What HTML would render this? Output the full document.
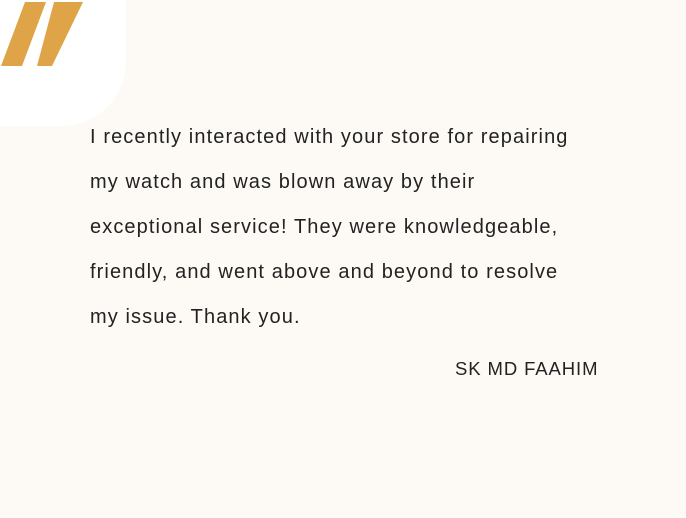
<!DOCTYPE html>
<html><head><style>
html,body{margin:0;padding:0;width:686px;height:518px;overflow:hidden;background:#fdfaf5;}
.wh{position:absolute;left:0;top:0;width:126px;height:126px;background:#fff;border-radius:0 0 64px 0;}
p{position:absolute;left:90px;top:115px;margin:0;width:580px;font-family:"Liberation Sans",sans-serif;font-size:20px;letter-spacing:1.1px;line-height:45px;color:#222;}
.n{position:absolute;left:455px;top:358px;font-family:"Liberation Sans",sans-serif;font-size:18.5px;color:#222;letter-spacing:0.9px;}
</style></head><body>
<div class="wh"></div>
<svg style="position:absolute;left:0;top:0" width="90" height="70">
<polygon points="25,2 46,2 22,66 1,66" fill="#dfa447"/>
<polygon points="54,2 83,2 52,66 37,66" fill="#dfa447"/>
</svg>
<p>I recently interacted with your store for repairing<br>my watch and was blown away by their<br>exceptional service! They were knowledgeable,<br>friendly, and went above and beyond to resolve<br>my issue. Thank you.</p>
<div class="n">SK MD FAAHIM</div>
</body></html>
